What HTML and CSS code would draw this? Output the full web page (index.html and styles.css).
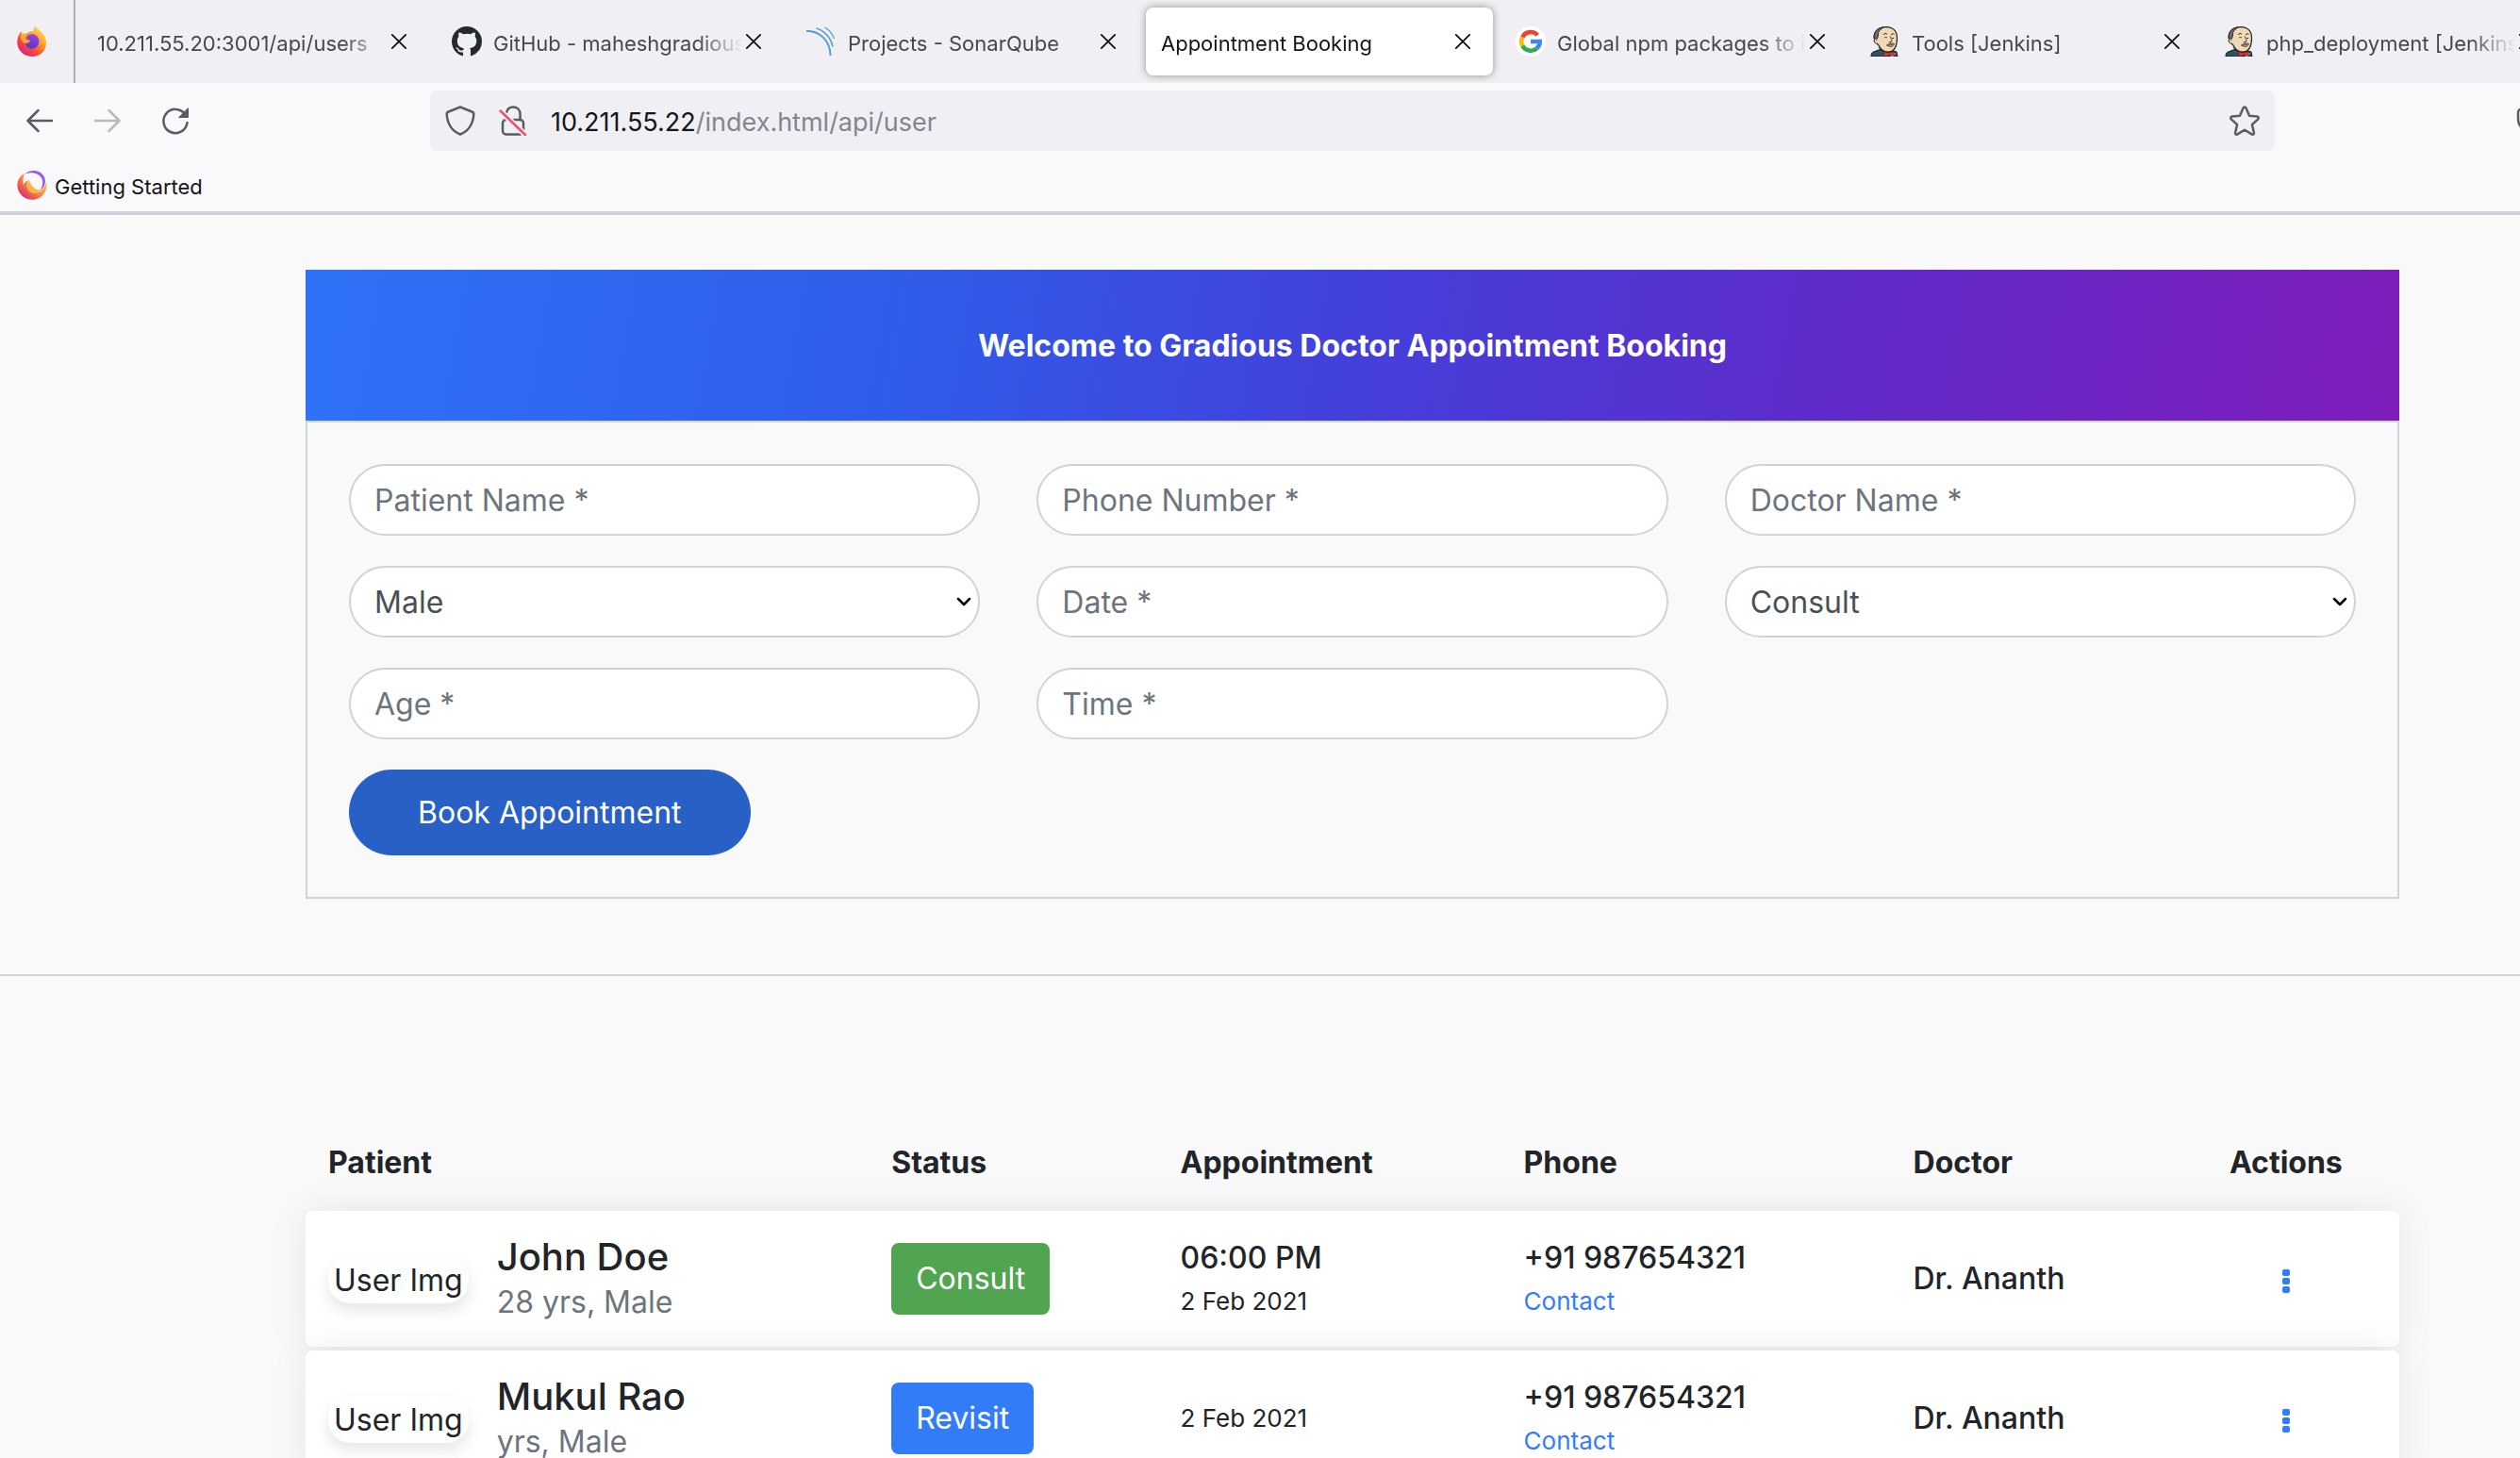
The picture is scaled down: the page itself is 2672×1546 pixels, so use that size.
FILE: index.html
```html
<!DOCTYPE html>
<html lang="en">
<head>
<meta charset="utf-8">
<title>Appointment Booking</title>
<link rel="stylesheet" href="styles.css">
</head>
<body>
<svg class="sprite" aria-hidden="true">
  <defs>
    <linearGradient id="flame" x1="1" y1="0" x2="0.2" y2="1">
      <stop offset="0" stop-color="#fff36b"/><stop offset="0.35" stop-color="#ffb02e"/><stop offset="0.7" stop-color="#f8473c"/><stop offset="1" stop-color="#d0208c"/>
    </linearGradient>
    <linearGradient id="globe" x1="0.7" y1="0" x2="0.3" y2="1">
      <stop offset="0" stop-color="#a03df0"/><stop offset="1" stop-color="#4a3cc0"/>
    </linearGradient>
    <linearGradient id="swirl" x1="1" y1="0.2" x2="0.2" y2="1">
      <stop offset="0" stop-color="#ffd04a"/><stop offset="0.5" stop-color="#f98a3c"/><stop offset="1" stop-color="#d8256c"/>
    </linearGradient>
    <symbol id="i-close" viewBox="0 0 16 16"><path d="M0.8 0.8l14.4 14.4M15.2 0.8L0.8 15.2" fill="none" stroke="#0c0c0d" stroke-width="1.7" stroke-linecap="round"/></symbol>
    <symbol id="i-jenkins" viewBox="0 0 32 32">
      <path d="M1 32c0-3 .5-4.500 3-5.200l6-2.300 12 .5 6 2 1 5z" fill="#335061" stroke="#1d1f22"/>
      <path d="M6 17C2 11 5 2 14 .8c9-1.300 14.500 3 14.500 11.500 0 8-2 13.700-8 14.700-5 .6-9-2-11.500-7z" fill="#efd9b8" stroke="#26221f" stroke-width="1.200"/>
      <path d="M6 17C2 11 4 2 14 1c-5 3-6 6-5.500 9l-2 4.500z" fill="#6f6d70" stroke="#26221f"/>
      <path d="M6 12.500c-3 1-2 6 1.500 6" fill="#efd9b8" stroke="#26221f"/>
      <path d="M14 9c1-2 3-2 4-.5M22 9c1-1.500 3-1.500 3.500-.5M15 12c1-.8 2-.8 3 0M23 12.500h2M21.500 10.500c.5 3 2.500 5 .5 6h-2M17.500 20c2-2 5-2.500 8-1.500-1 2-2 3-4 3z" fill="none" stroke="#413329"/>
      <path d="M18.500 19.500c3-1.500 5-1.500 7-.5l-3 1.800z" fill="#7c665a"/>
      <path d="M9 22c2 4 8 6 12 5" fill="none" stroke="#26221f"/>
      <path d="M19 28l3.500 4h3l1-4z" fill="#fff"/>
      <path d="M14.500 26.500l5 1.500 5.500-1.200.7 4.800-5-1.200-6 1.600z" fill="#d33833" stroke="#5b1413" stroke-width=".7"/>
    </symbol>
  </defs>
</svg>
<div class="browser">
  <header class="chrome">
    <div class="tab-strip">
      <div class="pinned">
        <svg class="favicon" viewBox="0 0 32 32" aria-label="Firefox">
          <path d="M19.500 0c1.500 3 7.500 5.500 10 10.500C34 21 28 32 16 32 6 32-.3 24 .3 15.500.6 11 3 7 4.500 5c.2 1.700.5 2.500 1.200 3.300C7.500 7.500 9 7.500 10.500 8c2-3 5-3.200 7-3C17 3 18 1 19.500 0z" fill="url(#flame)"/>
          <path d="M10 12c2-4 7-4.500 10-2.500 3 2 4 5 3 8.500-1 4-4 5.500-7.500 5.500S9 21 8.800 17c2 1 3.200.5 5-.8C15 15 12 14.500 10 12z" fill="url(#globe)"/>
          <path d="M4 8c2-.8 4.500-.5 6.500.8L9 12c-1.500 2 2 3 4.500 2.800 1 .3-1 2.500-4.700 3.200C5 17 3 12 4 8z" fill="#ffab2e"/>
        </svg>
      </div>
      <nav class="tabs" aria-label="Open tabs">
        <div class="tab"><a class="tab-title" href="#">10.211.55.20:3001/api/users</a><button class="close" type="button" aria-label="Close tab"><svg><use href="#i-close"/></svg></button></div>
        <div class="tab">
          <svg class="favicon" viewBox="0 0 16 16"><path fill="#24292e" d="M8 0C3.580 0 0 3.580 0 8c0 3.540 2.290 6.530 5.470 7.590.4.070.55-.17.55-.38 0-.19-.01-.82-.01-1.490-2.010.37-2.530-.49-2.690-.94-.09-.23-.48-.94-.82-1.130-.28-.15-.68-.52-.01-.53.63-.01 1.080.58 1.230.82.72 1.210 1.870.87 2.330.66.070-.52.28-.87.51-1.070-1.780-.2-3.640-.89-3.640-3.950 0-.87.31-1.590.82-2.150-.08-.2-.36-1.020.08-2.120 0 0 .67-.21 2.200.82.64-.18 1.320-.27 2-.27s1.360.09 2 .27c1.530-1.040 2.200-.82 2.200-.82.44 1.100.16 1.920.08 2.120.51.56.82 1.270.82 2.150 0 3.070-1.870 3.750-3.650 3.950.29.25.54.73.54 1.480 0 1.070-.01 1.930-.01 2.200 0 .21.15.46.55.38A8.010 8.010 0 0 0 16 8c0-4.420-3.580-8-8-8z"/></svg>
          <a class="tab-title" href="#">GitHub - maheshgradious</a><button class="close" type="button" aria-label="Close tab"><svg><use href="#i-close"/></svg></button></div>
        <div class="tab">
          <svg class="favicon" viewBox="0 0 32 32" fill="none" stroke="#549dd0"><path d="M0 4.700C14 4.700 25.500 15 25.500 31" stroke-width="2"/><path d="M10.500 2C19 4.500 26 11.500 28 21.500" stroke-width="1.600"/><path d="M19.500 1c4 2.300 8 6.500 10 12" stroke-width="1.300"/></svg>
          <a class="tab-title" href="#">Projects - SonarQube</a><button class="close" type="button" aria-label="Close tab"><svg><use href="#i-close"/></svg></button></div>
        <div class="tab active"><a class="tab-title" href="#">Appointment Booking</a><button class="close" type="button" aria-label="Close tab"><svg><use href="#i-close"/></svg></button></div>
        <div class="tab">
          <svg class="favicon" viewBox="0 0 32 32"><circle cx="16" cy="16" r="16" fill="#fff"/><g fill="none" stroke-width="4.600"><path d="M23.300 9.200A9.800 9.800 0 0 0 7.300 11.500" stroke="#ea4335"/><path d="M7.300 11.500a9.800 9.800 0 0 0 0 9" stroke="#fbbc05"/><path d="M7.300 20.500a9.800 9.800 0 0 0 15.200 2.800" stroke="#34a853"/><path d="M22.500 23.300c2.200-2 3.300-4.400 3.200-7.300H16" stroke="#4285f4"/></g></svg>
          <a class="tab-title" href="#">Global npm packages to i</a><button class="close" type="button" aria-label="Close tab"><svg><use href="#i-close"/></svg></button></div>
        <div class="tab"><svg class="favicon"><use href="#i-jenkins"/></svg><a class="tab-title" href="#">Tools [Jenkins]</a><button class="close" type="button" aria-label="Close tab"><svg><use href="#i-close"/></svg></button></div>
        <div class="tab"><svg class="favicon"><use href="#i-jenkins"/></svg><a class="tab-title" href="#">php_deployment [Jenkins]</a><button class="close" type="button" aria-label="Close tab"><svg><use href="#i-close"/></svg></button></div>
      </nav>
    </div>
    <div class="toolbar">
      <div class="nav-buttons">
        <button class="tool" type="button" aria-label="Back"><svg viewBox="0 0 32 32"><path d="M29 16H4M14.500 5L3.500 16l11 11"/></svg></button>
        <button class="tool" type="button" aria-label="Forward" disabled><svg viewBox="0 0 32 32"><path d="M3 16h25M17.500 5l11 11-11 11"/></svg></button>
        <button class="tool" type="button" aria-label="Reload"><svg viewBox="0 0 32 32"><path d="M26.500 9.500A12.600 12.600 0 1 0 28.500 18"/><path d="M29.500 3v9.500h-9.500z" fill="currentColor" stroke-width="1"/></svg></button>
      </div>
      <div class="url-bar">
        <svg class="url-icon" viewBox="0 0 32 32"><path d="M16 1.500l12.500 5c1.500.6 2 1.500 1.800 3C29.500 19 25 27 16 30.500 7 27 2.500 19 1.700 9.500c-.2-1.500.3-2.400 1.800-3z"/></svg>
        <svg class="url-icon" viewBox="0 0 32 32"><path d="M9 7.500C10 3 13 1.500 16 1.500c4.500 0 7.500 3 7.500 7.500v6"/><rect x="5" y="15" width="22" height="15.500" rx="3.500"/><path d="M2.500 5.500L29 31" stroke="#f0f0f4" stroke-width="6"/><path d="M2.500 5.500L29 31" stroke="#f0506e"/></svg>
        <span class="url"><b>10.211.55.22</b>/index.html/api/user</span>
        <button class="tool" type="button" aria-label="Bookmark this page"><svg viewBox="0 0 32 32"><path d="M14.500 2.500c.6-1.300 2.400-1.300 3 0l3.500 8.300 8.200.8c1.500.2 2 1.700 1 2.800l-6.300 5.700 2 8.700c.3 1.500-1 2.300-2.300 1.600L16 25.800l-7.600 4.600c-1.300.7-2.600-.1-2.300-1.600l2-8.700-6.300-5.700c-1-1.100-.5-2.600 1-2.800l8.200-.8z"/></svg></button>
      </div>
      <button class="tool pocket" type="button" aria-label="Save to Pocket"><svg viewBox="0 0 32 32"><path d="M5 4h22a3 3 0 0 1 3 3v7a14 14 0 0 1-28 0V7a3 3 0 0 1 3-3z"/></svg></button>
    </div>
    <div class="bookmarks">
      <a class="bookmark" href="#">
        <svg class="favicon" viewBox="0 0 32 32"><path d="M8 4C1 7-1.500 16 2 23c4 8 14 11 21.500 7C30 26.500 32.500 19 31 12.500 29.500 20 25 24.500 19 24.500c-7 0-10-6-7.500-13C9 12 7.500 14 7 16.500 6 12 6.500 7.500 8 4z" fill="url(#swirl)"/><path d="M8 4.500C15-1 26 0 29.500 9c1.500 5-.5 10-5 13 3-5 3.500-10 1.500-13.500C22.500 3 15 2 8 4.500z" fill="#9059ff"/><path d="M12.500 10.500c-4 7-.5 14 6.500 14 3 0 5-1.500 6.500-3.500-6 1-10-3-13-10.500z" fill="#ffb347"/></svg>
        <span class="bookmark-title">Getting Started</span></a>
    </div>
  </header>

  <main class="page">
    <section class="booking">
      <h1 class="booking-title">Welcome to Gradious Doctor Appointment Booking</h1>
      <form class="booking-form">
        <div class="fields">
          <label><span class="sr">Patient Name</span><input class="control" type="text" placeholder="Patient Name *"></label>
          <label><span class="sr">Phone Number</span><input class="control" type="text" placeholder="Phone Number *"></label>
          <label><span class="sr">Doctor Name</span><input class="control" type="text" placeholder="Doctor Name *"></label>
          <label class="select"><span class="sr">Gender</span><select class="control"><option>Male</option><option>Female</option></select><svg viewBox="0 0 16 10"><path d="M2 2l6 6 6-6"/></svg></label>
          <label><span class="sr">Date</span><input class="control" type="text" placeholder="Date *"></label>
          <label class="select"><span class="sr">Visit type</span><select class="control"><option>Consult</option><option>Revisit</option></select><svg viewBox="0 0 16 10"><path d="M2 2l6 6 6-6"/></svg></label>
          <label><span class="sr">Age</span><input class="control" type="text" placeholder="Age *"></label>
          <label><span class="sr">Time</span><input class="control" type="text" placeholder="Time *"></label>
        </div>
        <button class="book" type="submit">Book Appointment</button>
      </form>
    </section>
    <hr class="divider">
    <section class="list">
      <table class="appointments">
        <colgroup><col class="c-patient"><col class="c-status"><col class="c-time"><col class="c-phone"><col class="c-doctor"><col class="c-actions"></colgroup>
        <thead>
          <tr><th>Patient</th><th>Status</th><th>Appointment</th><th>Phone</th><th>Doctor</th><th class="actions">Actions</th></tr>
        </thead>
        <tbody>
          <tr>
            <td><div class="patient"><span class="avatar">User Img</span><div><p class="name">John Doe</p><p class="muted">28 yrs, Male</p></div></div></td>
            <td><button class="status consult" type="button">Consult</button></td>
            <td><p class="strong">06:00 PM</p><p class="small">2 Feb 2021</p></td>
            <td><p class="strong">+91 987654321</p><p class="small"><a href="#">Contact</a></p></td>
            <td class="strong">Dr. Ananth</td>
            <td class="actions"><button class="more" type="button" aria-label="More actions"><i></i><i></i><i></i></button></td>
          </tr>
          <tr>
            <td><div class="patient"><span class="avatar">User Img</span><div><p class="name">Mukul Rao</p><p class="muted">yrs, Male</p></div></div></td>
            <td><button class="status revisit" type="button">Revisit</button></td>
            <td><p class="small">2 Feb 2021</p></td>
            <td><p class="strong">+91 987654321</p><p class="small"><a href="#">Contact</a></p></td>
            <td class="strong">Dr. Ananth</td>
            <td class="actions"><button class="more" type="button" aria-label="More actions"><i></i><i></i><i></i></button></td>
          </tr>
        </tbody>
      </table>
    </section>
  </main>
</div>
</body>
</html>
```
FILE: styles.css
```css
* { box-sizing: border-box; }

body {
  margin: 0;
  background: #f9f9f9;
  color: #212529;
  font-family: Inter, "Liberation Sans", sans-serif;
  font-size: 32px;
  line-height: 48px;
}

button, input, select { font: inherit; color: inherit; margin: 0; }
button { border: 0; padding: 0; background: none; }
p { margin: 0; }
a { color: inherit; text-decoration: none; }

.sprite { position: absolute; width: 0; height: 0; }
.sr { position: absolute; width: 1px; height: 1px; overflow: hidden; clip-path: inset(50%); }

.browser { display: flex; flex-direction: column; height: 100vh; overflow: hidden; }

/* Browser window controls */
.chrome {
  flex: none;
  background: #f9f9fb;
  border-bottom: 4px solid #ced2d6;
  font-size: 22px;
  line-height: 32px;
}
.favicon { flex: none; width: 32px; height: 32px; }

.tab-strip { display: flex; height: 88px; background: #f0f0f4; overflow: hidden; }
.pinned { flex: none; display: flex; align-items: center; width: 80px; padding-left: 18px; border-right: 2px solid #b2b2b6; }
.tabs { display: flex; gap: 8px; padding: 8px 0 8px 7px; }
.tab {
  flex: none;
  display: flex;
  align-items: center;
  gap: 12px;
  width: 368px;
  padding: 0 20px 0 16px;
  border-radius: 8px;
  color: #48484c;
}
.tab.active { background: #fff; color: #15141a; box-shadow: 0 0 8px rgba(0, 0, 0, .4); }
.tab-title {
  flex: 1;
  min-width: 0;
  margin-right: -12px;
  padding-top: 3px;
  overflow: hidden;
  white-space: nowrap;
  mask-image: linear-gradient(to left, transparent, #000 48px);
}
.close { flex: none; display: flex; align-items: center; justify-content: center; width: 24px; height: 24px; }
.close svg { width: 16px; height: 16px; }

.toolbar { display: flex; align-items: center; height: 80px; padding-left: 26px; overflow: hidden; }
.nav-buttons { flex: none; display: flex; gap: 40px; width: 430px; }
.tool { flex: none; width: 32px; height: 32px; color: #5b5b66; }
.tool:disabled { opacity: .4; }
.tool svg, .url-icon {
  display: block;
  width: 32px;
  height: 32px;
  fill: none;
  stroke: currentColor;
  stroke-width: 2.500;
  stroke-linecap: round;
  stroke-linejoin: round;
}
.url-bar {
  flex: 1;
  display: flex;
  align-items: center;
  gap: 24px;
  height: 64px;
  padding: 0 16px;
  border-radius: 8px;
  background: #f0f0f4;
  color: #5b5b66;
}
.url { flex: 1; padding-top: 3px; font-size: 27px; color: #85858c; }
.url b { font-weight: 400; color: #15141a; }
.pocket { margin: 0 -28px 0 256px; }

.bookmarks { display: flex; align-items: center; height: 56px; padding: 0 18px; }
.bookmark { display: flex; align-items: center; gap: 8px; color: #15141a; }
.bookmark-title { padding-top: 3px; }

/* Page */
.page { flex: 1; min-height: 0; overflow: hidden; padding-top: 58px; }
.booking, .list { margin: 0 128px 0 324px; }

.booking-title {
  margin: 0;
  padding: 57px 0 55px;
  background: linear-gradient(100deg, #2f72f8, #2f5de9 28%, #4340da 50%, #6328c8 76%, #7e1dba);
  color: #fff;
  font-size: 32px;
  font-weight: 700;
  line-height: 48px;
  text-align: center;
}
.booking-form { padding: 44px; border: 2px solid #ced4da; }
.fields { display: grid; grid-template-columns: repeat(3, 1fr); gap: 32px 60px; }
.control {
  display: block;
  width: 100%;
  height: 76px;
  padding: 1px 25px 0;
  border: 2px solid #ced4da;
  border-radius: 38px;
  background: #fff;
  color: #495057;
  appearance: none;
}
.control::placeholder { color: #6c757d; opacity: 1; }
.select { display: grid; align-items: center; }
.select > * { grid-area: 1 / 1; }
.select svg { justify-self: end; width: 16px; height: 10px; margin-right: 9px; fill: none; stroke: #000; stroke-width: 2.500; stroke-linecap: round; stroke-linejoin: round; }
.book {
  display: block;
  height: 91px;
  margin-top: 32px;
  padding: 0 73px;
  border-radius: 46px;
  background: #2860c5;
  color: #fff;
}

.divider { margin: 80px 0 0; border: 0; border-top: 2px solid #ced4da; }

/* Appointments */
.list { margin-top: 160px; }
.appointments { width: 100%; table-layout: fixed; border-collapse: separate; border-spacing: 0 4px; }
.c-patient { width: 26.9%; }
.c-status { width: 13.8%; }
.c-time { width: 16.4%; }
.c-phone { width: 18.6%; }
.c-doctor { width: 15.1%; }
th, td { padding: 0 24px; text-align: left; vertical-align: middle; }
th { height: 81px; padding-bottom: 13px; font-weight: 700; white-space: nowrap; }
tbody tr { height: 144px; border-radius: 8px; box-shadow: 0 0 40px rgba(0, 0, 0, .08); }
td { background: #fff; }
td:first-child { border-radius: 8px 0 0 8px; }
td:last-child { border-radius: 0 8px 8px 0; }
.actions { padding-right: 60px; text-align: center; }

.patient { display: flex; align-items: center; gap: 30px; padding-top: 2px; white-space: nowrap; }
.avatar { flex: none; padding: 2px 6px 0; border-radius: 24px; box-shadow: 0 8px 16px rgba(0, 0, 0, .1); }
.name { font-size: 40px; font-weight: 500; }
.muted { color: #6c757d; }
.strong { font-weight: 500; }
.small { font-size: 26px; line-height: 44px; }
.small a { color: #337cf8; }
.status { height: 76px; padding: 0 26px; border-radius: 8px; color: #fff; }
.consult { background: #52a550; }
.revisit { background: #337cf8; }
.more { display: inline-flex; flex-direction: column; gap: 2px; vertical-align: middle; }
.more i { width: 8px; height: 7px; border-radius: 2px; background: #337cf8; }
```
